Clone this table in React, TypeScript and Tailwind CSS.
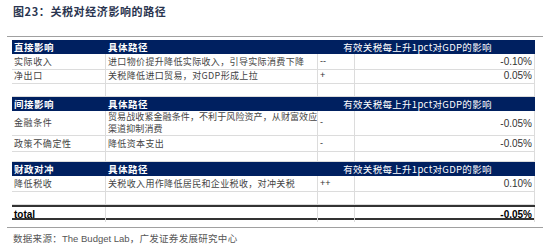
import type { ReactNode } from "react";

const cjk = "font-['Noto_Sans_CJK_SC',sans-serif]";

type Row = { name: string; path: ReactNode; sign: string; value: string; tall?: boolean };

const sections: { title: string; rows: Row[] }[] = [
  {
    title: "直接影响",
    rows: [
      { name: "实际收入", path: "进口物价提升降低实际收入，引导实际消费下降", sign: "--", value: "-0.10%" },
      { name: "净出口", path: "关税降低进口贸易，对GDP形成上拉", sign: "+", value: "0.05%" },
    ],
  },
  {
    title: "间接影响",
    rows: [
      {
        name: "金融条件",
        path: (
          <>
            贸易战收紧金融条件，不利于风险资产，从财富效应
            <br />
            渠道抑制消费
          </>
        ),
        sign: "-",
        value: "-0.05%",
        tall: true,
      },
      { name: "政策不确定性", path: "降低资本支出", sign: "-", value: "-0.05%" },
    ],
  },
  {
    title: "财政对冲",
    rows: [{ name: "降低税收", path: "关税收入用作降低居民和企业税收，对冲关税", sign: "++", value: "0.10%" }],
  },
];

const cell = "border-r border-b border-[#dcdcdc] px-[2px] flex items-center";
const cols = "grid grid-cols-[94px_212px_37px_180px]";

function Header({ title }: { title: string }) {
  return (
    <div className={`${cols} h-[14px] bg-[#002060] text-white text-[9.5px] font-bold ${cjk}`}>
      <div className="flex items-center pl-[2px] tracking-[0.5px]">{title}</div>
      <div className="flex items-center pl-[2px] tracking-[0.5px]">具体路径</div>
      <div className="col-span-2 flex items-center justify-center pr-[18px] font-normal tracking-[0.3px]">
        有效关税每上升1pct对GDP的影响
      </div>
    </div>
  );
}

function Body({ row }: { row: Row }) {
  return (
    <div className={`${cols} ${row.tall ? "h-[25px]" : "h-[14px]"} text-[9px] text-[#444] ${cjk}`}>
      <div className={`${cell} tracking-[0.6px]`}>{row.name}</div>
      <div
        className={`${cell} leading-[12px] whitespace-nowrap overflow-hidden ${
          row.tall ? "tracking-[0.1px]" : "tracking-[0.35px]"
        }`}
      >
        <span>{row.path}</span>
      </div>
      <div className={`${cell} font-['Liberation_Sans',sans-serif] text-[9px] text-[#333]`}>{row.sign}</div>
      <div className={`${cell} justify-end font-['Liberation_Sans',sans-serif] text-[10px] text-[#333]`}>
        {row.value}
      </div>
    </div>
  );
}

function Empty({ h = "h-[14px]" }: { h?: string }) {
  return (
    <div className={`${cols} ${h}`}>
      <div className={cell} />
      <div className={cell} />
      <div className={cell} />
      <div className={cell} />
    </div>
  );
}

export default function App() {
  return (
    <div className="w-[550px] h-[247px] bg-white relative overflow-hidden">
      <div className={`pl-[13px] pt-[3px] h-[36px] text-[11px] font-bold text-[#2a3550] ${cjk} tracking-[0.6px]`}>
        图23：关税对经济影响的路径
      </div>
      <div className="mx-[7px] border-t border-[#a0a0a0]" />
      <div className="ml-[12px] mt-[3px] w-[523px]">
        {sections.map((s, i) => (
          <div key={s.title}>
            <Header title={s.title} />
            {s.rows.map((r) => (
              <Body key={r.name} row={r} />
            ))}
            {i < 2 ? <Empty h={i === 0 ? "h-[15px]" : "h-[12px]"} /> : <Empty h="h-[15px]" />}
          </div>
        ))}
        <div className={`${cols} h-[15px] border-t-2 border-b-2 border-[#333] font-['Liberation_Sans',sans-serif] text-[10px] font-bold text-black`}>
          <div className="border-r border-[#dcdcdc] flex items-center px-[2px]">total</div>
          <div className="border-r border-[#dcdcdc]" />
          <div className="border-r border-[#dcdcdc]" />
          <div className="border-r border-[#dcdcdc] flex items-center justify-end px-[2px]">-0.05%</div>
        </div>
      </div>
      <div className="mx-[7px] mt-[7px] border-t border-[#a0a0a0]" />
      <div className={`pl-[13px] pt-[3px] text-[9.5px] text-[#555] ${cjk} tracking-[0.3px]`}>
        数据来源：<span className="font-['Liberation_Sans',sans-serif] tracking-normal">The Budget Lab</span>，广发证券发展研究中心
      </div>
    </div>
  );
}
